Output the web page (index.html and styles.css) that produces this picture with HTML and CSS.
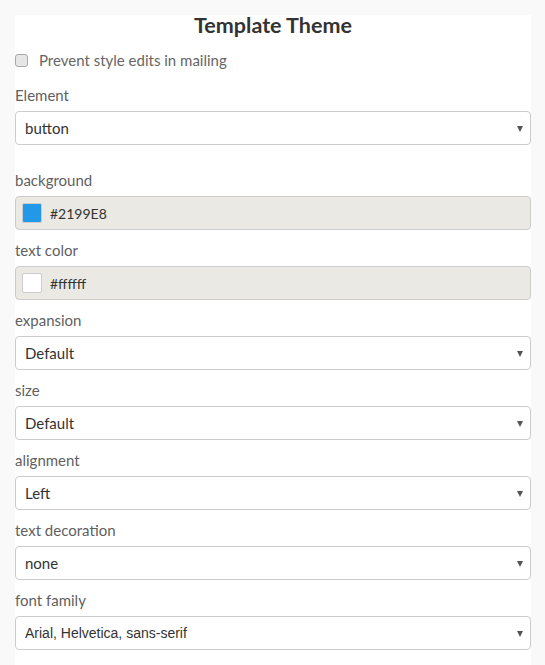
FILE: index.html
```html
<!DOCTYPE html>
<html lang="en">
<head>
    <meta charset="UTF-8">
    <meta name="viewport" content="width=device-width, initial-scale=1.0">
    <title>Template Theme</title>
    <link rel="stylesheet" href="styles.css">
</head>
<body>
    <div class="panel">
        <h2 class="panel-title">Template Theme</h2>

        <label class="check-row">
            <input type="checkbox" class="check-box">
            <span>Prevent style edits in mailing</span>
        </label>

        <div class="field field-element">
            <label class="field-label" for="element">Element</label>
            <div class="select-wrap">
                <select id="element" class="select">
                    <option>button</option>
                </select>
            </div>
        </div>

        <div class="field">
            <label class="field-label">background</label>
            <div class="color-input">
                <span class="swatch swatch-blue"></span>
                <span class="color-value">#2199E8</span>
            </div>
        </div>

        <div class="field">
            <label class="field-label">text color</label>
            <div class="color-input">
                <span class="swatch swatch-white"></span>
                <span class="color-value">#ffffff</span>
            </div>
        </div>

        <div class="field">
            <label class="field-label" for="expansion">expansion</label>
            <div class="select-wrap">
                <select id="expansion" class="select">
                    <option>Default</option>
                </select>
            </div>
        </div>

        <div class="field">
            <label class="field-label" for="size">size</label>
            <div class="select-wrap">
                <select id="size" class="select">
                    <option>Default</option>
                </select>
            </div>
        </div>

        <div class="field">
            <label class="field-label" for="alignment">alignment</label>
            <div class="select-wrap">
                <select id="alignment" class="select">
                    <option>Left</option>
                </select>
            </div>
        </div>

        <div class="field">
            <label class="field-label" for="decoration">text decoration</label>
            <div class="select-wrap">
                <select id="decoration" class="select">
                    <option>none</option>
                </select>
            </div>
        </div>

        <div class="field">
            <label class="field-label" for="family">font family</label>
            <div class="select-wrap">
                <select id="family" class="select select-arial">
                    <option>Arial, Helvetica, sans-serif</option>
                </select>
            </div>
        </div>
    </div>
</body>
</html>
```

FILE: styles.css
```css
body {
    margin: 0;
    padding: 15px 14px 0 15px;
    background-color: #f9f9f9;
    font-family: 'Lato', 'Open Sans', sans-serif;
    color: #333;
}

.panel {
    background-color: #fff;
    min-height: 650px;
}

.panel-title {
    margin: 0;
    font-size: 21.5px;
    font-weight: bold;
    line-height: 18px;
    padding-top: 1px;
    text-align: center;
    color: #333;
}

.check-row {
    display: flex;
    align-items: center;
    gap: 11px;
    margin-top: 17px;
    font-size: 15px;
    color: #666;
}

.check-box {
    -webkit-appearance: none;
    appearance: none;
    width: 13px;
    height: 13px;
    margin: 0;
    border: 1px solid #a9a9a9;
    border-radius: 3px;
    background-color: #e6e6e6;
}

.field {
    margin-top: 10px;
}

.field-element {
    margin-top: 16px;
    margin-bottom: 25px;
}

.field-label {
    display: block;
    font-size: 15px;
    line-height: 20px;
    margin-bottom: 6px;
    color: #5f5f5f;
}

.select-wrap {
    position: relative;
}

/* custom arrow like the original */
.select-wrap::after {
    content: '';
    position: absolute;
    right: 8px;
    top: 15px;
    border-left: 3px solid transparent;
    border-right: 3px solid transparent;
    border-top: 6px solid #555;
    pointer-events: none;
}

.select {
    -webkit-appearance: none;
    appearance: none;
    display: block;
    width: 100%;
    height: 34px;
    padding: 0 24px 0 9px;
    border: 1px solid #ccc;
    border-radius: 4px;
    background-color: #fff;
    font-family: inherit;
    font-size: 15px;
    color: #333;
}

.select-arial {
    font-family: 'Liberation Sans', Arial, sans-serif;
    font-size: 14px;
}

.color-input {
    display: flex;
    align-items: center;
    gap: 8px;
    height: 34px;
    box-sizing: border-box;
    padding: 0 6px;
    border: 1px solid #ccc;
    border-radius: 4px;
    background-color: #eae9e3;
    font-size: 14px;
    color: #333;
}

.swatch {
    width: 18px;
    height: 18px;
    border: 1px solid #ccc;
    border-radius: 2px;
}

.swatch-blue {
    background-color: #2199e8;
}

.swatch-white {
    background-color: #fff;
}
```
